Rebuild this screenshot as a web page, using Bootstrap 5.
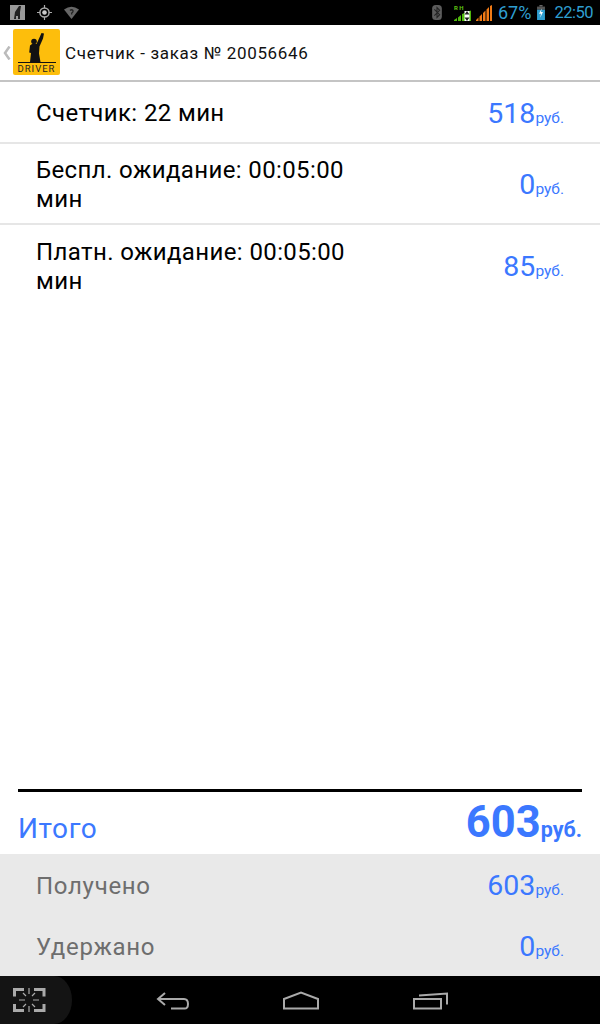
<!DOCTYPE html>
<html lang="ru">
<head>
    <meta charset="UTF-8">
    <meta name="viewport" content="width=device-width, initial-scale=1.0">
    <title>Счетчик</title>
    <link href="https://cdn.jsdelivr.net/npm/bootstrap@5.3.0/dist/css/bootstrap.min.css" rel="stylesheet">
    <style>
        html, body { height: 1024px; overflow: hidden; }
        body { font-family: Roboto, "Liberation Sans", sans-serif; color: #000; background: #fff; }
        .screen { width: 600px; height: 1024px; }
        .status-bar { height: 25px; background: #000; padding: 0 7px 0 10px; }
        .status-text { color: #2f9fd0; font-size: 18px; line-height: 25px; margin-left: 2px; }
        .status-clock { color: #2f9fd0; font-size: 16.5px; letter-spacing: -.5px; line-height: 25px; margin-left: 8px; }
        .status-battery { margin-left: 5px; }
        .status-signal { margin-left: 1px; }
        .app-bar { height: 57px; border-bottom: 2px solid #c4c4c4; background: #fff; }
        .back-mark { width: 13px; padding-left: 3px; }
        .app-title { font-size: 17px; letter-spacing: .67px; margin: 3px 0 0 5px; color: #111; }
        .meter-row { padding: 0 36px; border-bottom: 2px solid #e6e6e6; }
        .row-one { height: 62px; }
        .row-two { height: 81px; }
        .row-three { height: 81px; border-bottom: 0; }
        .meter-label { width: 330px; font-size: 24px; line-height: 29px; letter-spacing: .38px; margin-top: 3px; }
        .meter-value { font-size: 28.5px; line-height: 30px; color: #3b78ff; }
        .meter-unit { font-size: 15.5px; color: #3b78ff; }
        .meter-amount { margin-top: 5px; }
        .total-box { margin: 0 18px; height: 65px; border-top: 3px solid #000; color: #3b78ff; }
        .total-label { font-size: 28px; letter-spacing: .6px; margin-top: 12px; }
        .total-value { font-size: 43.5px; font-weight: 700; line-height: 50px; }
        .total-unit { font-size: 21.5px; font-weight: 700; }
        .paid-box { height: 122px; background: #e9e9e9; padding: 0 36px; }
        .paid-row { height: 61px; }
        .paid-label { font-size: 24px; color: #6e6e6e; letter-spacing: .7px; margin-top: 2px; }
        .nav-bar { height: 48px; background: #000; position: relative; }
        .nav-glow { width: 72px; height: 48px; background: #141414; border-radius: 0 36px 36px 0 / 0 48px 48px 0; }
        .nav-icon { position: absolute; top: 0; }
        .nav-scan { left: 13px; }
        .nav-back { left: 156px; }
        .nav-home { left: 283px; }
        .nav-recent { left: 413px; }
    </style>
</head>

<body>
<div class="screen d-flex flex-column">
    <!-- status bar -->
    <div class="status-bar d-flex align-items-center flex-shrink-0">
        <svg width="15" height="15" viewBox="0 0 15 15" class="me-2">
            <rect width="15" height="15" fill="#999"/>
            <path d="M9 1l2 0-1 6 0 7-2 0 0-3-2 0 0 3-2 0 1-7 2-3z" fill="#222"/>
        </svg>
        <svg width="15" height="15" viewBox="0 0 15 15" class="ms-1 me-2">
            <circle cx="7.5" cy="7.5" r="4.6" fill="none" stroke="#aaa" stroke-width="1.5"/>
            <circle cx="7.5" cy="7.5" r="2.3" fill="#ccc"/>
            <path d="M7.5 0v3M7.5 12v3M0 7.5h3M12 7.5h3" stroke="#aaa" stroke-width="1.2"/>
        </svg>
        <svg width="15" height="13" viewBox="0 0 15 13" class="ms-1">
            <path d="M0 3.5Q7.5-2 15 3.5L7.5 13z" fill="#666"/>
            <path d="M6 4.5q1.5-1.5 3 0 .5 1.5-1.300 2.600v1.300" fill="none" stroke="#222" stroke-width="1.300"/>
        </svg>
        <div class="ms-auto d-flex align-items-center">
            <svg width="10" height="15" viewBox="0 0 11 17" class="me-2">
                <rect width="11" height="17" rx="4" fill="#5c5c5c"/>
                <path d="M2.500 5l6 6-3 3V3l3 3-6 6" fill="none" stroke="#222" stroke-width="1.200"/>
            </svg>
            <svg width="17" height="16" viewBox="0 0 17 16" class="ms-1 me-1">
                <text x="0" y="4.800" font-size="6" font-family="Roboto" font-weight="700" fill="#5fc412" letter-spacing="1.500">RH</text>
                <path d="M0 16h3v-3L0 15zM4 16h3v-6L4 12.500zM8 16h9V5.500L8 9z" fill="#4fb80c"/>
                <rect x="10.500" y="6" width="5" height="10" fill="#fff"/>
                <path d="M13 6l2.500 3.500h-5zM13 16l2.500-3.500h-5z" fill="#222"/>
            </svg>
            <svg width="16" height="16" viewBox="0 0 16 16" class="me-1 status-signal">
                <path d="M0 16h2.500v-3.500L0 15zM3.500 16h2.500V9l-2.500 2.500zM7 16h2.500V5.500L7 8zM10.500 16H13V2l-2.500 2.500zM14 16h2V0l-2 1z" fill="#f07a16"/>
            </svg>
            <span class="status-text">67%</span>
            <svg width="10" height="15" viewBox="0 0 10 19" class="status-battery">
                <rect x="3" width="4" height="2" fill="#666"/>
                <rect y="2" width="10" height="4" fill="#555"/>
                <rect y="6" width="10" height="13" fill="#2f9fd0"/>
                <path d="M6 4L2.500 11H5L4 16l3.500-7H5z" fill="#fff"/>
            </svg>
            <span class="status-clock">22:50</span>
        </div>
    </div>

    <!-- action bar -->
    <div class="app-bar d-flex align-items-center flex-shrink-0">
        <span class="back-mark d-flex">
            <svg width="8" height="14" viewBox="0 0 8 14"><path d="M6.500 0.500L2 7l4.500 6.500" fill="none" stroke="#bbb" stroke-width="2.500"/></svg>
        </span>
        <svg width="47" height="47" viewBox="0 0 47 47" class="flex-shrink-0">
            <rect width="47" height="46" rx="2" fill="#fdbe0c"/>
            <circle cx="21" cy="12.500" r="2.800" fill="#111"/>
            <path d="M28.500 4l2.500.5-1 5-3.500 8-.5 7 1.500 8.500H17l1-9-1.800-.5.800-7 2-1.500h4.500l3-6.500z" fill="#111"/>
            <rect x="5" y="33" width="38" height="1" fill="#111"/>
            <text x="23.500" y="43" text-anchor="middle" font-size="9.500" letter-spacing="1" font-family="Roboto, sans-serif" fill="#222">DRIVER</text>
        </svg>
        <span class="app-title">Счетчик - заказ № 20056646</span>
    </div>

    <!-- list -->
    <div class="meter-row row-one d-flex align-items-center justify-content-between flex-shrink-0">
        <div class="meter-label">Счетчик: 22 мин</div>
        <div class="meter-amount"><span class="meter-value">518</span><span class="meter-unit">руб.</span></div>
    </div>
    <div class="meter-row row-two d-flex align-items-center justify-content-between flex-shrink-0">
        <div class="meter-label">Беспл. ожидание: 00:05:00 мин</div>
        <div class="meter-amount"><span class="meter-value">0</span><span class="meter-unit">руб.</span></div>
    </div>
    <div class="meter-row row-three d-flex align-items-center justify-content-between flex-shrink-0">
        <div class="meter-label">Платн. ожидание: 00:05:00 мин</div>
        <div class="meter-amount"><span class="meter-value">85</span><span class="meter-unit">руб.</span></div>
    </div>

    <div class="flex-grow-1"></div>

    <!-- totals -->
    <div class="total-box d-flex align-items-center justify-content-between flex-shrink-0">
        <span class="total-label">Итого</span>
        <div><span class="total-value">603</span><span class="total-unit">руб.</span></div>
    </div>
    <div class="paid-box flex-shrink-0">
        <div class="paid-row d-flex align-items-center justify-content-between">
            <span class="paid-label">Получено</span>
            <div class="meter-amount"><span class="meter-value">603</span><span class="meter-unit">руб.</span></div>
        </div>
        <div class="paid-row d-flex align-items-center justify-content-between">
            <span class="paid-label">Удержано</span>
            <div class="meter-amount"><span class="meter-value">0</span><span class="meter-unit">руб.</span></div>
        </div>
    </div>

    <!-- nav bar -->
    <div class="nav-bar flex-shrink-0">
        <div class="nav-glow"></div>
        <svg class="nav-icon nav-scan" width="33" height="48" viewBox="0 0 33 48" fill="none" stroke="#aaa">
            <path d="M11 13.500H1.500v7M21 13.500h10v7M1.500 28v6.500H11M31 28v6.500H21" stroke-width="3"/>
            <path d="M16 12v6M16 30v6M6 24h6M20 24h6M10 17l3 3M22 17l-3 3M10 31l3-3M22 31l-3-3" stroke-width="1.200"/>
        </svg>
        <svg class="nav-icon nav-back" width="34" height="48" viewBox="0 0 34 48" fill="none" stroke="#aaa" stroke-width="2">
            <path d="M9 17l-7 6 7 6M2 23h26q4 0 4 5t-4 4.500H15"/>
        </svg>
        <svg class="nav-icon nav-home" width="36" height="48" viewBox="0 0 36 48" fill="none" stroke="#aaa" stroke-width="2">
            <path d="M1 32.500V23L18 16.500 35 23v9.500z"/>
        </svg>
        <svg class="nav-icon nav-recent" width="35" height="48" viewBox="0 0 35 48" fill="none" stroke="#aaa" stroke-width="2">
            <path d="M1 32.500V23h27v9.500zM6 19.500l28-2v11"/>
        </svg>
    </div>
</div>

<script src="https://cdn.jsdelivr.net/npm/bootstrap@5.3.0/dist/js/bootstrap.bundle.min.js"></script>
</body>
</html>
